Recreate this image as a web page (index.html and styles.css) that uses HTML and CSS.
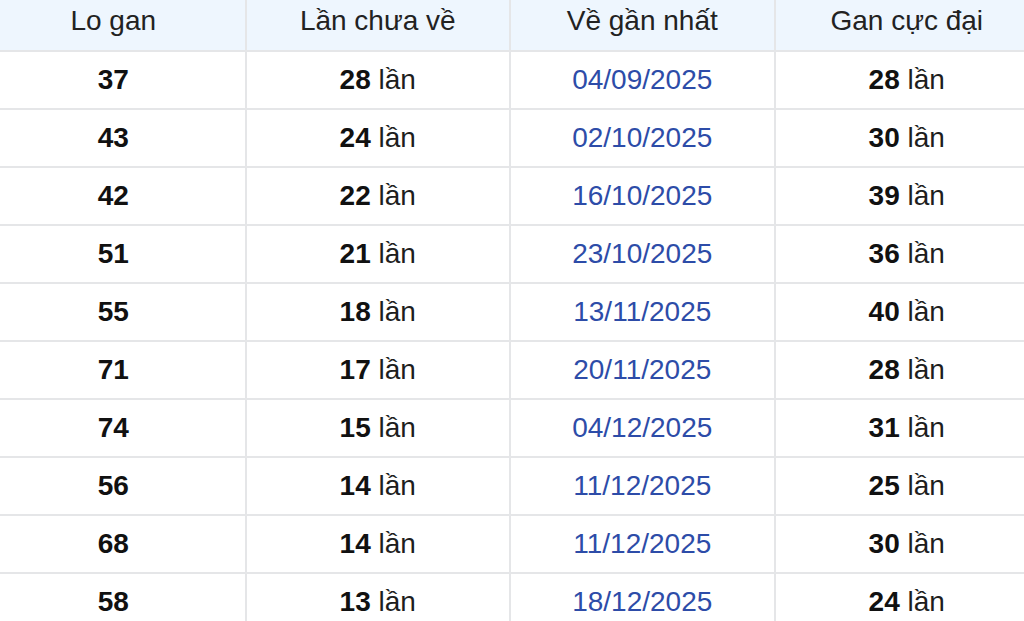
FILE: index.html
```html
<!DOCTYPE html>
<html lang="vi">
<head>
<meta charset="utf-8">
<title>Lo gan</title>
<link rel="stylesheet" href="styles.css">
</head>
<body>
<div class="wrap">
<table class="gan">
  <thead>
    <tr><th>Lo gan</th><th>Lần chưa về</th><th>Về gần nhất</th><th>Gan cực đại</th></tr>
  </thead>
  <tbody>
    <tr><td><b>37</b></td><td><b>28</b> lần</td><td class="date">04/09/2025</td><td><b>28</b> lần</td></tr>
    <tr><td><b>43</b></td><td><b>24</b> lần</td><td class="date">02/10/2025</td><td><b>30</b> lần</td></tr>
    <tr><td><b>42</b></td><td><b>22</b> lần</td><td class="date">16/10/2025</td><td><b>39</b> lần</td></tr>
    <tr><td><b>51</b></td><td><b>21</b> lần</td><td class="date">23/10/2025</td><td><b>36</b> lần</td></tr>
    <tr><td><b>55</b></td><td><b>18</b> lần</td><td class="date">13/11/2025</td><td><b>40</b> lần</td></tr>
    <tr><td><b>71</b></td><td><b>17</b> lần</td><td class="date">20/11/2025</td><td><b>28</b> lần</td></tr>
    <tr><td><b>74</b></td><td><b>15</b> lần</td><td class="date">04/12/2025</td><td><b>31</b> lần</td></tr>
    <tr><td><b>56</b></td><td><b>14</b> lần</td><td class="date">11/12/2025</td><td><b>25</b> lần</td></tr>
    <tr><td><b>68</b></td><td><b>14</b> lần</td><td class="date">11/12/2025</td><td><b>30</b> lần</td></tr>
    <tr><td><b>58</b></td><td><b>13</b> lần</td><td class="date">18/12/2025</td><td><b>24</b> lần</td></tr>
  </tbody>
</table>
</div>
</body>
</html>
```
FILE: styles.css
```css
html, body {
  margin: 0;
  padding: 0;
  background: #ffffff;
  overflow: hidden;
}
.wrap {
  width: 1024px;
  height: 621px;
  overflow: hidden;
}
.gan {
  margin-left: -20px;
  margin-top: -10px;
  border-collapse: collapse;
  table-layout: fixed;
  width: 1058px;
  font-family: "Liberation Sans", Arial, sans-serif;
  font-size: 28px;
  color: #1e1e1e;
}
.gan th,
.gan td {
  width: 262.5px;
  border: 2px solid #e5e6e8;
  text-align: center;
  padding: 0;
  height: 56px;
}
.gan th {
  background: #eef6fe;
  font-weight: normal;
  color: #222222;
  height: 58px;
  vertical-align: middle;
}
.gan td b {
  font-weight: bold;
  color: #111111;
}
.gan td.date {
  color: #2d4ca8;
}
```
